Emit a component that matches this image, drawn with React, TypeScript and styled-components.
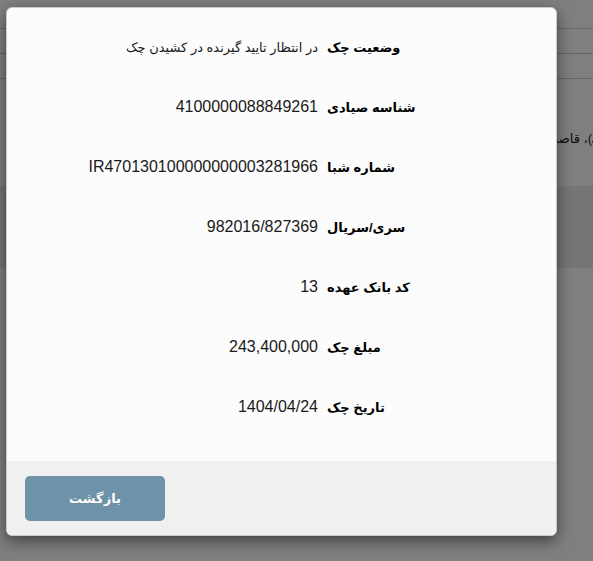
import React from 'react';
import styled, { createGlobalStyle } from 'styled-components';

const GlobalStyle = createGlobalStyle`
  html, body {
    margin: 0;
    padding: 0;
    background: #ffffff;
    font-family: "Liberation Sans", "DejaVu Sans", sans-serif;
  }
`;

const Page = styled.div`
  width: 593px;
  height: 561px;
  position: relative;
  overflow: hidden;
  direction: rtl;
  background: #ffffff;
`;

const PageRow = styled.div<{ $h: number; $line?: string; $bg?: string }>`
  height: ${({ $h }) => $h}px;
  border-bottom: 1px solid ${({ $line }) => $line || 'transparent'};
  background: ${({ $bg }) => $bg || 'transparent'};
`;

const PageNote = styled.div`
  height: 107px;
  box-sizing: border-box;
  padding: 52px 0 0 0;
  margin-right: -14px;
  font-size: 13px;
  color: #222;
  white-space: nowrap;
`;

const Backdrop = styled.div`
  position: absolute;
  inset: 0;
  background: rgba(0, 0, 0, 0.5);
`;

const Modal = styled.div`
  position: absolute;
  top: 7px;
  left: 6px;
  width: 551px;
  height: 529px;
  box-sizing: border-box;
  border: 1px solid #c9c9c9;
  border-radius: 6px;
  background: #fcfcfc;
  box-shadow: 0 5px 15px rgba(0, 0, 0, 0.5);
  display: flex;
  flex-direction: column;
  overflow: hidden;
  direction: rtl;
`;

const Body = styled.div`
  flex: 1;
  padding: 9px 139px 0 0;
  display: flex;
  flex-direction: column;
`;

const Row = styled.div`
  height: 60px;
  display: flex;
  align-items: center;
  gap: 9px;
`;

const Label = styled.div`
  width: 90px;
  flex-shrink: 0;
  text-align: left;
  font-size: 13px;
  font-weight: 700;
  color: #000;
  white-space: nowrap;
`;

const Value = styled.div<{ $fa?: boolean }>`
  font-size: ${({ $fa }) => ($fa ? '13px' : '16px')};
  color: #1a1a1a;
  white-space: nowrap;
`;

const Footer = styled.div`
  height: 74px;
  box-sizing: border-box;
  background: #f0f0f0;
  padding: 15px 18px 14px;
  display: flex;
  justify-content: flex-end;
  align-items: flex-start;
`;

const BackButton = styled.button`
  width: 140px;
  height: 45px;
  border: none;
  border-radius: 5px;
  background: #6e93a9;
  color: #ffffff;
  font-family: "Liberation Sans", "DejaVu Sans", sans-serif;
  font-size: 13px;
  font-weight: 700;
  cursor: pointer;
`;

const rows: { label: string; value: string; fa?: boolean }[] = [
  { label: 'وضعیت چک', value: 'در انتظار تایید گیرنده در کشیدن چک', fa: true },
  { label: 'شناسه صیادی', value: '4100000088849261' },
  { label: 'شماره شبا', value: 'IR470130100000000003281966' },
  { label: 'سری/سریال', value: '982016/827369' },
  { label: 'کد بانک عهده', value: '13' },
  { label: 'مبلغ چک', value: '243,400,000' },
  { label: 'تاریخ چک', value: '1404/04/24' },
];

const App: React.FC = () => {
  return (
    <Page>
      <GlobalStyle />
      <PageRow $h={28} $line="#d6d6d6" />
      <PageRow $h={24} $line="#b9cde2" />
      <PageRow $h={24} $line="#b9cde2" />
      <PageNote>(٪/)، قاصدک</PageNote>
      <PageRow $h={81} $bg="#ececec" />
      <Backdrop />
      <Modal>
        <Body>
          {rows.map((r) => (
            <Row key={r.label}>
              <Label>{r.label}</Label>
              <Value $fa={r.fa} dir={r.fa ? 'rtl' : 'ltr'}>{r.value}</Value>
            </Row>
          ))}
        </Body>
        <Footer>
          <BackButton>بازگشت</BackButton>
        </Footer>
      </Modal>
    </Page>
  );
};

export default App;
